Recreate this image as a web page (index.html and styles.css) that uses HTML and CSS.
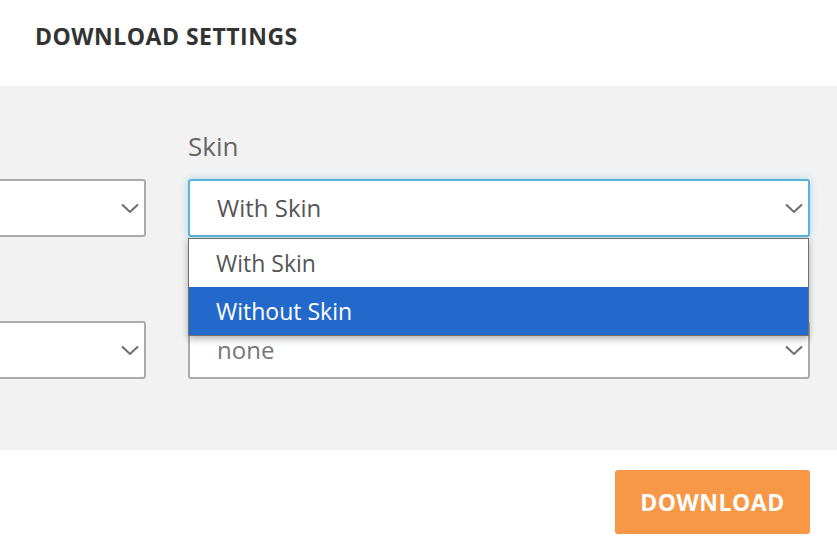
FILE: index.html
```html
<!DOCTYPE html>
<html lang="en">
<head>
<meta charset="utf-8">
<title>Download Settings</title>
<link rel="stylesheet" href="styles.css">
</head>
<body>
<header class="header">
  <h1 class="title">DOWNLOAD SETTINGS</h1>
</header>
<section class="panel">
  <div class="grid">
    <div class="field field-left">
      <div class="label">&nbsp;</div>
      <div class="select">
        <span class="value"></span>
        <svg class="chev" width="18" height="11" viewBox="0 0 18 11"><path d="M1 1.5 L9 9 L17 1.5" fill="none" stroke="#6b6b6b" stroke-width="2"/></svg>
      </div>
    </div>
    <div class="field">
      <div class="label">Skin</div>
      <div class="select-wrap">
        <div class="select focused">
          <span class="value">With Skin</span>
          <svg class="chev" width="18" height="11" viewBox="0 0 18 11"><path d="M1 1.5 L9 9 L17 1.5" fill="none" stroke="#6b6b6b" stroke-width="2"/></svg>
        </div>
        <ul class="dropdown">
          <li class="option">With Skin</li>
          <li class="option selected">Without Skin</li>
        </ul>
      </div>
    </div>
    <div class="field field-left">
      <div class="label">&nbsp;</div>
      <div class="select">
        <span class="value"></span>
        <svg class="chev" width="18" height="11" viewBox="0 0 18 11"><path d="M1 1.5 L9 9 L17 1.5" fill="none" stroke="#6b6b6b" stroke-width="2"/></svg>
      </div>
    </div>
    <div class="field">
      <div class="label">&nbsp;</div>
      <div class="select">
        <span class="value muted">none</span>
        <svg class="chev" width="18" height="11" viewBox="0 0 18 11"><path d="M1 1.5 L9 9 L17 1.5" fill="none" stroke="#6b6b6b" stroke-width="2"/></svg>
      </div>
    </div>
  </div>
</section>
<footer class="footer">
  <button class="download">DOWNLOAD</button>
</footer>
</body>
</html>
```

FILE: styles.css
```css
* { box-sizing: border-box; }
html, body { margin: 0; padding: 0; background: #fff; }
body {
  font-family: "Open Sans", "Noto Sans", sans-serif;
  overflow: hidden;
  width: 837px;
  height: 543px;
}
.header {
  height: 86px;
  padding: 21px 0 0 35px;
}
.title {
  margin: 0;
  font-size: 23px;
  line-height: 30px;
  font-weight: 700;
  letter-spacing: 0.5px;
  color: #333;
}
.panel {
  background: #f2f2f2;
  height: 364px;
  padding: 43px 27px 0 0;
}
.grid {
  display: grid;
  grid-template-columns: 146px 622px;
  column-gap: 42px;
  row-gap: 34px;
}
.label {
  font-size: 26px;
  line-height: 34px;
  color: #666;
  margin-bottom: 16px;
}
.select-wrap { position: relative; }
.select {
  height: 58px;
  background: #fff;
  border: 2px solid #ababab;
  border-radius: 3px;
  display: flex;
  align-items: center;
  justify-content: space-between;
  padding: 0 5px 0 27px;
}
.field-left .select {
  margin-left: -40px;
  width: calc(100% + 40px);
}
.select.focused {
  border-color: #5ab4da;
  box-shadow: 0 0 9px rgba(90, 180, 218, 0.45);
}
.value {
  font-size: 24px;
  line-height: 32px;
  color: #555;
}
.value.muted { color: #777; }
.chev { display: block; }
.dropdown {
  position: absolute;
  top: 59px;
  left: 0;
  width: 621px;
  margin: 0;
  padding: 0;
  list-style: none;
  background: #fff;
  border: 1px solid #6f6f6f;
  box-shadow: 0 3px 7px rgba(0, 0, 0, 0.3);
  z-index: 2;
}
.option {
  height: 48px;
  display: flex;
  align-items: center;
  padding-left: 27px;
  padding-bottom: 1px;
  font-size: 23px;
  color: #555;
}
.option.selected {
  background: #2369cc;
  color: #fff;
}
.footer {
  display: flex;
  justify-content: flex-end;
  padding: 20px 27px 0 0;
}
.download {
  width: 195px;
  height: 64px;
  border: none;
  border-radius: 3px;
  background: #f69846;
  color: #fff;
  font-family: "Open Sans", "Noto Sans", sans-serif;
  font-size: 23px;
  font-weight: 700;
  letter-spacing: 0.5px;
  padding: 0;
}
```
